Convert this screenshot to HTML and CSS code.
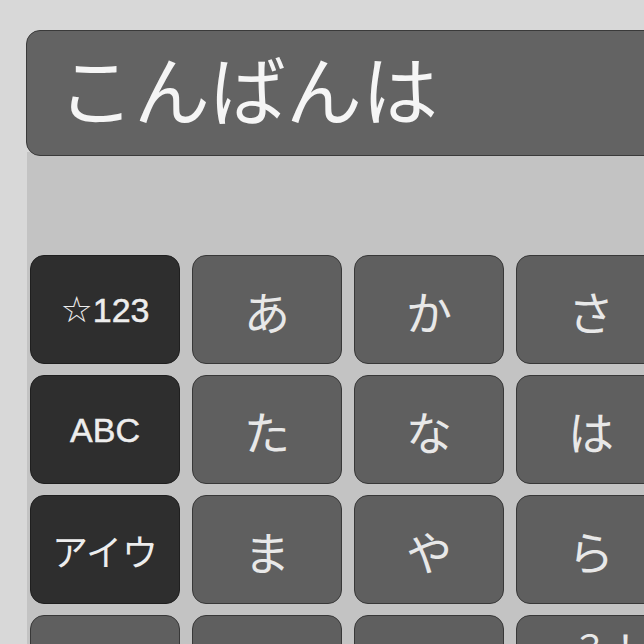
FILE: index.html
```html
<!DOCTYPE html>
<html lang="ja">
<head>
<meta charset="utf-8">
<title>Kana keyboard</title>
<link rel="stylesheet" href="styles.css">
</head>
<body>
<div class="screen">
  <div class="input">こんばんは</div>
  <div class="keyboard">
    <div class="keys">
      <div class="key dark"><span class="sym"><span class="star">☆</span>123</span></div>
      <div class="key">あ</div>
      <div class="key">か</div>
      <div class="key">さ</div>
      <div class="key">&nbsp;</div>

      <div class="key dark"><span class="sym">ABC</span></div>
      <div class="key">た</div>
      <div class="key">な</div>
      <div class="key">は</div>
      <div class="key">&nbsp;</div>

      <div class="key dark"><span class="kata">アイウ</span></div>
      <div class="key">ま</div>
      <div class="key">や</div>
      <div class="key">ら</div>
      <div class="key">&nbsp;</div>

      <div class="key"></div>
      <div class="key"></div>
      <div class="key"></div>
      <div class="key top"><span class="punct">、。？！</span></div>
      <div class="key"></div>
    </div>
  </div>
</div>
</body>
</html>
```

FILE: styles.css
```css
html, body {
  margin: 0;
  padding: 0;
}

body {
  background: #d8d8d8;
  width: 644px;
  height: 644px;
  overflow: hidden;
  font-family: "Noto Sans CJK JP", "Noto Sans", sans-serif;
}

.screen {
  padding: 30px 0 0 26px;
  width: 900px;
}

.input {
  box-sizing: border-box;
  height: 126px;
  width: 860px;
  background: #636363;
  border: 1.5px solid #3a3a3a;
  border-radius: 14px;
  color: #f5f5f5;
  font-size: 76px;
  line-height: 1;
  display: flex;
  align-items: center;
  padding: 0 0 12px 31px;
  position: relative;
  z-index: 1;
}

.keyboard {
  background: #c3c3c3;
  margin-left: 1px;
  margin-top: -4px;
  padding: 103px 0 0 3px;
  height: 600px;
}

.keys {
  display: grid;
  grid-template-columns: repeat(5, 150px);
  grid-auto-rows: 109px;
  column-gap: 12px;
  row-gap: 11px;
}

.key {
  box-sizing: border-box;
  background: #5f5f5f;
  border: 1.5px solid #383838;
  border-radius: 14px;
  color: #e8e8e8;
  font-size: 46px;
  display: flex;
  align-items: center;
  justify-content: center;
  line-height: 1;
  overflow: hidden;
}

.key.dark {
  background: #2e2e2e;
  border-color: #1f1f1f;
}

.sym {
  font-family: "Liberation Sans", Arial, sans-serif;
  font-size: 34px;
  color: #ededed;
  -webkit-text-stroke: 0.5px #ededed;
  display: flex;
  align-items: center;
}

.star {
  font-family: "DejaVu Sans", sans-serif;
  font-size: 36px;
  -webkit-text-stroke: 0;
  margin-right: 0;
}

.kata {
  font-size: 36px;
  color: #ededed;
}

.key.top {
  align-items: flex-start;
}

.punct {
  font-size: 36px;
  padding-top: 12px;
  margin-left: -21px;
  white-space: nowrap;
}
```
